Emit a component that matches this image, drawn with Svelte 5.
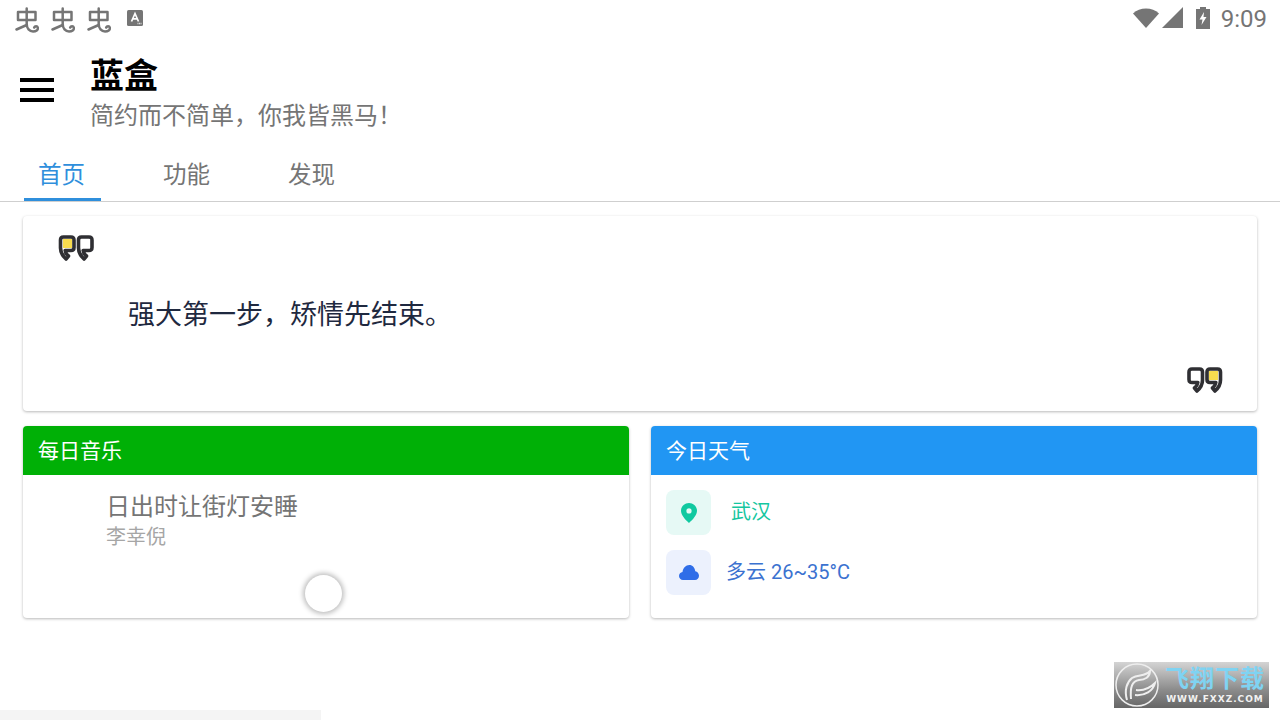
<script>
  const tabs = ['首页', '功能', '发现'];
</script>

{#snippet bug()}
  <svg class="bug" viewBox="0 0 24 26" fill="none" stroke="#757575" stroke-width="2.500" stroke-linecap="round" stroke-linejoin="round">
    <path d="M3 5V13H20.500V5H3Z" />
    <path d="M11.700 1.500V17C11.700 21.500 14.500 24.500 18 24.500C21 24.500 23.300 23 22.800 20.500C22.400 18.800 19.800 18.800 19.200 20.500" />
    <path d="M1.500 22.500L11.700 18" />
  </svg>
{/snippet}

{#snippet quote(closing)}
  <svg class="quote" class:opening={!closing} viewBox="0 0 36 26" fill="none">
    <rect x="22" y="4" width="9" height="9" fill="#f7dc4f" />
    <path d="M5 2H12.500C14.500 2 15.500 3 15.500 5V13C15.500 17.500 13.500 21 10 24L7.500 21C9.500 19.500 10.500 17.800 10.800 15.500H5C3 15.500 2 14.500 2 12.500V5C2 3 3 2 5 2Z" stroke="#2f2f33" stroke-width="3.600" stroke-linejoin="round" />
    <path d="M23 2H30.500C32.500 2 33.500 3 33.500 5V13C33.500 17.500 31.500 21 28 24L25.500 21C27.500 19.500 28.500 17.800 28.800 15.500H23C21 15.500 20 14.500 20 12.500V5C20 3 21 2 23 2Z" stroke="#2f2f33" stroke-width="3.600" stroke-linejoin="round" />
  </svg>
{/snippet}

<div class="page">
  <div class="status">
    <div class="status-left">
      {@render bug()}
      {@render bug()}
      {@render bug()}
      <svg class="a-icon" viewBox="0 0 16 16">
        <rect width="16" height="16" rx="1.500" fill="#757575" />
        <path d="M4.500 11.500L8 3.500L11.500 11.500M6 8.800H10" fill="none" stroke="#fff" stroke-width="1.700" />
        <path d="M10.500 13.500H14.500" stroke="#ddd" stroke-width="1.500" stroke-dasharray="1 .5" />
      </svg>
    </div>
    <div class="status-right">
      <svg class="wifi" viewBox="0 0 26 20"><path d="M0 5.500C3.500 2.200 8 .5 13 .5C18 .5 22.500 2.200 26 5.500L13 20Z" fill="#757575" /></svg>
      <svg class="signal" viewBox="0 0 21 21"><path d="M21 0V21H0Z" fill="#757575" /></svg>
      <svg class="battery" viewBox="0 0 14 22">
        <path d="M4 0H10V2H14V22H0V2H4Z" fill="#757575" />
        <path d="M8 5L3.500 12.500H6.500L5.500 18L10.500 10H7.500Z" fill="#fff" />
      </svg>
      <span class="time">9:09</span>
    </div>
  </div>

  <header class="appbar">
    <div class="menu"><i></i><i></i><i></i></div>
    <div class="titles">
      <h1>蓝盒</h1>
      <p>简约而不简单，你我皆黑马！</p>
    </div>
  </header>

  <nav class="tabs">
    {#each tabs as tab, i}
      <div class="tab" class:active={i === 0}>{tab}</div>
    {/each}
  </nav>

  <main class="content">
    <section class="card hero">
      <div class="hero-top">{@render quote(false)}</div>
      <p class="sentence">强大第一步，矫情先结束。</p>
      <div class="hero-bottom">{@render quote(true)}</div>
    </section>

    <div class="columns">
      <section class="card panel">
        <div class="panel-head green">每日音乐</div>
        <div class="music">
          <div class="song">日出时让街灯安睡</div>
          <div class="artist">李幸倪</div>
          <div class="disc-wrap"><div class="disc"></div></div>
        </div>
      </section>

      <section class="card panel">
        <div class="panel-head blue">今日天气</div>
        <div class="weather">
          <div class="row">
            <span class="badge teal">
              <svg viewBox="0 0 16 20" class="pin"><path fill-rule="evenodd" d="M8 0C12.400 0 16 3.400 16 7.800C16 12 12 16.500 8 20C4 16.500 0 12 0 7.800C0 3.400 3.600 0 8 0ZM8 5.300A2.600 2.600 0 1 0 8 10.500A2.600 2.600 0 1 0 8 5.300Z" fill="#10c9a0" /></svg>
            </span>
            <span class="city">武汉</span>
          </div>
          <div class="row">
            <span class="badge indigo">
              <svg viewBox="0 0 20 15" class="cloud"><path d="M4 15C1.800 15 0 13.300 0 11C0 8.900 1.500 7.300 3.500 7C4 3.200 6.800 0 10.300 0C13.600 0 15.800 2.600 16.300 6.200C18.400 6.600 20 8.600 20 10.800C20 13.200 18.200 15 16 15Z" fill="#2f6de8" /></svg>
            </span>
            <span class="temp">多云 26~35°C</span>
          </div>
        </div>
      </section>
    </div>
  </main>

  <div class="home-strip"></div>

  <div class="watermark">
    <svg class="wm-logo" viewBox="0 0 46 46" fill="none">
      <circle cx="23" cy="23" r="21" stroke="#eee" stroke-width="1.500" />
      <path d="M13 38C10 28 13 20 18 16C24 12 31 15 36 9C36 15 31 18 25 18C18 19 16 25 17 37M22 28C30 29 36 26 41 21C39 29 31 34 21 33" stroke="#eee" stroke-width="2" />
    </svg>
    <div class="wm-text">
      <div class="wm-cn">飞翔下载</div>
      <div class="wm-en">WWW.FXXZ.COM</div>
    </div>
  </div>
</div>

<style>
  :global(body) {
    margin: 0;
    background: #fff;
  }

  .page {
    position: relative;
    width: 1280px;
    height: 720px;
    overflow: hidden;
    background: #fff;
    font-family: Roboto, "Noto Sans CJK SC", sans-serif;
    display: flex;
    flex-direction: column;
  }

  .status {
    height: 36px;
    flex: none;
    display: flex;
    align-items: center;
    justify-content: space-between;
    padding: 0 13px 0 15px;
    color: #757575;
  }

  .status-left {
    display: flex;
    align-items: center;
    gap: 12px;
  }

  .bug {
    width: 24px;
    height: 26px;
    margin-top: 3px;
  }

  .a-icon {
    width: 16px;
    height: 18px;
    margin-left: 4px;
    margin-top: 0;
  }

  .status-right {
    display: flex;
    align-items: center;
  }

  .wifi {
    width: 26px;
    height: 20px;
    margin-right: 3px;
    margin-top: -1px;
  }

  .signal {
    width: 21px;
    height: 21px;
    margin-right: 13px;
    margin-top: -1px;
  }

  .battery {
    width: 14px;
    height: 22px;
    margin-right: 11px;
    margin-top: -1px;
  }

  .time {
    font-size: 24px;
    line-height: 36px;
    margin-top: 1px;
  }

  .appbar {
    height: 104px;
    flex: none;
    display: flex;
    align-items: flex-start;
  }

  .menu {
    width: 34px;
    margin: 42px 36px 0 20px;
    display: flex;
    flex-direction: column;
    gap: 6px;
  }

  .menu i {
    display: block;
    height: 4px;
    background: #000;
  }

  .titles {
    padding-top: 18px;
  }

  h1 {
    margin: 0;
    font-size: 34px;
    line-height: 44px;
    font-weight: 700;
    color: #000;
  }

  .titles p {
    margin: 0;
    padding-top: 2px;
    font-size: 24px;
    line-height: 32px;
    color: #757575;
  }

  .tabs {
    height: 62px;
    box-sizing: border-box;
    flex: none;
    display: flex;
    padding-left: 24px;
    border-bottom: 1px solid #cfcfcf;
  }

  .tab {
    width: 77px;
    margin-right: 48px;
    padding-right: 2px;
    text-align: center;
    font-size: 23.500px;
    line-height: 70px;
    height: 61px;
    box-sizing: border-box;
    color: #757575;
  }

  .tab.active {
    color: #2f8fdc;
    border-bottom: 3px solid #2f8fdc;
  }

  .content {
    padding: 14px 23px 0;
    display: flex;
    flex-direction: column;
    gap: 15px;
  }

  .card {
    background: #fff;
    border-radius: 4px;
    box-shadow: 0 1px 3px rgba(0, 0, 0, 0.28);
  }

  .hero {
    height: 195px;
    box-sizing: border-box;
    padding: 19px 34px 18px 35px;
    display: flex;
    flex-direction: column;
  }

  .quote {
    display: block;
    width: 36px;
    height: 26px;
  }

  .quote.opening {
    transform: scaleX(-1);
  }

  .hero-top {
    height: 26px;
  }

  .sentence {
    margin: 32px 0 0 70px;
    font-size: 27px;
    line-height: 44px;
    color: #1f2940;
    flex: 1;
  }

  .hero-bottom {
    display: flex;
    justify-content: flex-end;
  }

  .columns {
    display: flex;
    gap: 22px;
  }

  .panel {
    flex: 1;
    height: 192px;
    overflow: hidden;
  }

  .panel-head {
    height: 49px;
    padding-left: 15px;
    font-size: 21px;
    line-height: 51px;
    color: #fff;
  }

  .green {
    background: #00b006;
  }

  .blue {
    background: #2196f3;
  }

  .music {
    padding: 15px 0 0 83px;
  }

  .song {
    font-size: 24px;
    line-height: 34px;
    color: #757575;
  }

  .artist {
    font-size: 20px;
    line-height: 27px;
    color: #a6a6a6;
  }

  .disc-wrap {
    margin: 24px 0 0 199px;
  }

  .disc {
    width: 37px;
    height: 37px;
    border-radius: 50%;
    background: #fff;
    box-shadow: 0 0 5px 2px rgba(0, 0, 0, 0.26);
  }

  .weather {
    padding: 15px;
    display: flex;
    flex-direction: column;
    gap: 15px;
  }

  .row {
    display: flex;
    align-items: center;
    height: 45px;
    font-size: 20px;
  }

  .badge {
    width: 45px;
    height: 45px;
    border-radius: 8px;
    display: flex;
    align-items: center;
    justify-content: center;
  }

  .teal {
    background: #e6f9f5;
  }

  .indigo {
    background: #ecf1fd;
  }

  .pin {
    width: 16px;
    height: 20px;
  }

  .cloud {
    width: 20px;
    height: 15px;
  }

  .city {
    margin: 0 0 5px 20px;
    color: #14c6a0;
  }

  .temp {
    margin: 0 0 5px 15px;
    color: #3b72d0;
  }

  .home-strip {
    position: absolute;
    left: 0;
    bottom: 0;
    width: 321px;
    height: 10px;
    background: #f4f4f4;
  }

  .watermark {
    position: absolute;
    left: 1114px;
    top: 662px;
    width: 155px;
    height: 46px;
    display: flex;
    align-items: center;
    gap: 2px;
    background: linear-gradient(#d4d4d4, #8c8c8c 60%, #666);
  }

  .wm-logo {
    width: 46px;
    height: 46px;
    flex: none;
  }

  .wm-text {
    display: flex;
    flex-direction: column;
    align-items: center;
    width: 106px;
  }

  .wm-cn {
    font-size: 24px;
    line-height: 27px;
    font-weight: 700;
    letter-spacing: 1px;
    color: #7fd3f2;
  }

  .wm-en {
    font-family: "DejaVu Sans", sans-serif;
    font-size: 9px;
    line-height: 12px;
    font-weight: 700;
    letter-spacing: 1px;
    color: #f2f2f2;
  }
</style>
